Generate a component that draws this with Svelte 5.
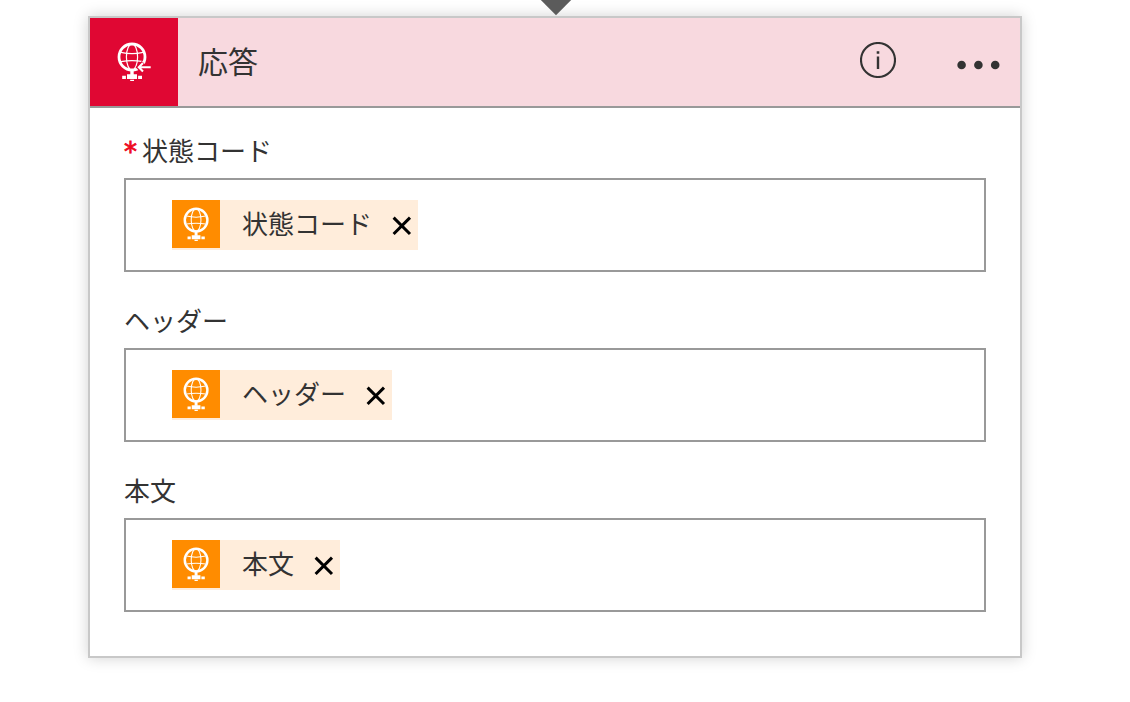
<script>
  const fields = [
    { label: '状態コード', token: '状態コード', required: true },
    { label: 'ヘッダー', token: 'ヘッダー', required: false },
    { label: '本文', token: '本文', required: false }
  ];
</script>

{#snippet globe(arrow)}
  <svg class="globe" viewBox="0 0 36 42" fill="none" stroke="#fff">
    <circle cx="15" cy="15" r="13" stroke-width="2.8" />
    <ellipse cx="15" cy="15" rx="5.6" ry="13" stroke-width="1.2" />
    <path d="M4 10.4Q15 13 26 10.4M4 19.6Q15 17.6 26 19.6" stroke-width="1.2" />
    <path d="M15 28v5" stroke-width="3.4" />
    <path d="M10 32.3h10v4.7H10zM5.2 33.8h3.7v3.2H5.2zM21.1 33.8h3.9v3.2h-3.9zM13.2 37.7h3.8v1.3h-3.8z" fill="#fff" stroke="none" />
    {#if arrow}
      <path d="M34 25.2H23M26.5 20.7L22 25.2L26.5 29.7" stroke="#e00733" stroke-width="4.8" />
      <path d="M33.7 25.2H22.4M26 20.9L21.8 25.2L26 29.5" stroke-width="2.1" />
    {/if}
  </svg>
{/snippet}

<main>
  <svg class="connector" viewBox="0 0 32 16">
    <path d="M0 -.8h32L16 15.2z" fill="#5b5b5b" />
  </svg>

  <section class="card">
    <header>
      <div class="brand">{@render globe(true)}</div>
      <h1>応答</h1>
      <svg class="info" viewBox="0 0 36 36">
        <circle cx="18" cy="18" r="17" fill="none" stroke="#333" stroke-width="2.1" />
        <path d="M16.7 9.3h2.6v2.5h-2.6zM16.8 14.5h2.4V27h-2.4z" fill="#333" />
      </svg>
      <svg class="more" viewBox="0 0 44 10" fill="#333">
        <circle cx="5.6" cy="5" r="4.3" />
        <circle cx="22.4" cy="5" r="4.3" />
        <circle cx="39.2" cy="5" r="4.3" />
      </svg>
    </header>

    <div class="body">
      {#each fields as field}
        <div class="field">
          <div class="label">
            {#if field.required}<span class="required">*</span>{/if}{field.label}
          </div>
          <div class="input">
            <div class="token">
              <div class="icon">{@render globe(false)}</div>
              <span>{field.token}</span>
              <svg class="remove" viewBox="0 0 20 20">
                <path d="M1.6 1.6L18 18M18 1.6L1.6 18" stroke="#000" stroke-width="3" />
              </svg>
            </div>
          </div>
        </div>
      {/each}
    </div>
  </section>
</main>

<style>
  :global(body) {
    background: #fff;
  }

  main {
    box-sizing: border-box;
    height: 702px;
    overflow: hidden;
    color: #333;
    font-family: "Noto Sans CJK JP", "Liberation Sans", sans-serif;
    font-weight: 400;
  }

  svg {
    display: block;
    flex: none;
  }

  .connector {
    width: 32px;
    height: 16px;
    margin-left: 540px;
  }

  .card {
    box-sizing: border-box;
    width: 934px;
    height: 642px;
    margin-left: 88px;
    border: 2px solid #c8c8c8;
    box-shadow: 0 0 14px rgba(0, 0, 0, 0.18);
  }

  header {
    display: flex;
    align-items: center;
    height: 88px;
    background: #f8d9df;
    border-bottom: 2px solid #999;
  }

  .brand {
    box-sizing: border-box;
    width: 88px;
    height: 88px;
    padding: 24px 0 0 27px;
    background: #e00733;
  }

  .brand .globe {
    width: 36px;
    height: 42px;
  }

  h1 {
    flex: 1;
    margin: 0 0 4px 20px;
    font-size: 30px;
    font-weight: 400;
    line-height: 44px;
  }

  .info {
    width: 36px;
    height: 36px;
    margin: 0 60px 4px 0;
  }

  .more {
    width: 44px;
    height: 10px;
    margin: 6px 20px 0 0;
  }

  .body {
    padding: 24px 34px 0;
  }

  .field {
    margin-bottom: 30px;
  }

  .label {
    height: 46px;
    font-size: 26px;
    line-height: 36px;
  }

  .required {
    display: inline-block;
    width: 18px;
    color: #ee0a1e;
    font-family: "DejaVu Sans", sans-serif;
    line-height: 1;
    -webkit-text-stroke: 0.8px #ee0a1e;
  }

  .input {
    display: flex;
    box-sizing: border-box;
    height: 94px;
    padding: 20px 46px;
    border: 2px solid #999;
  }

  .token {
    display: flex;
    height: 50px;
    background: #ffeddb;
  }

  .icon {
    box-sizing: border-box;
    width: 48px;
    height: 48px;
    padding: 6.6px 0 0 11px;
    background: #ff8c00;
  }

  .icon .globe {
    width: 31.4px;
    height: 36.6px;
  }

  .token span {
    margin-left: 22px;
    font-size: 26px;
    line-height: 46px;
  }

  .remove {
    width: 20px;
    height: 20px;
    margin: 16px 6px 0 20px;
  }
</style>
